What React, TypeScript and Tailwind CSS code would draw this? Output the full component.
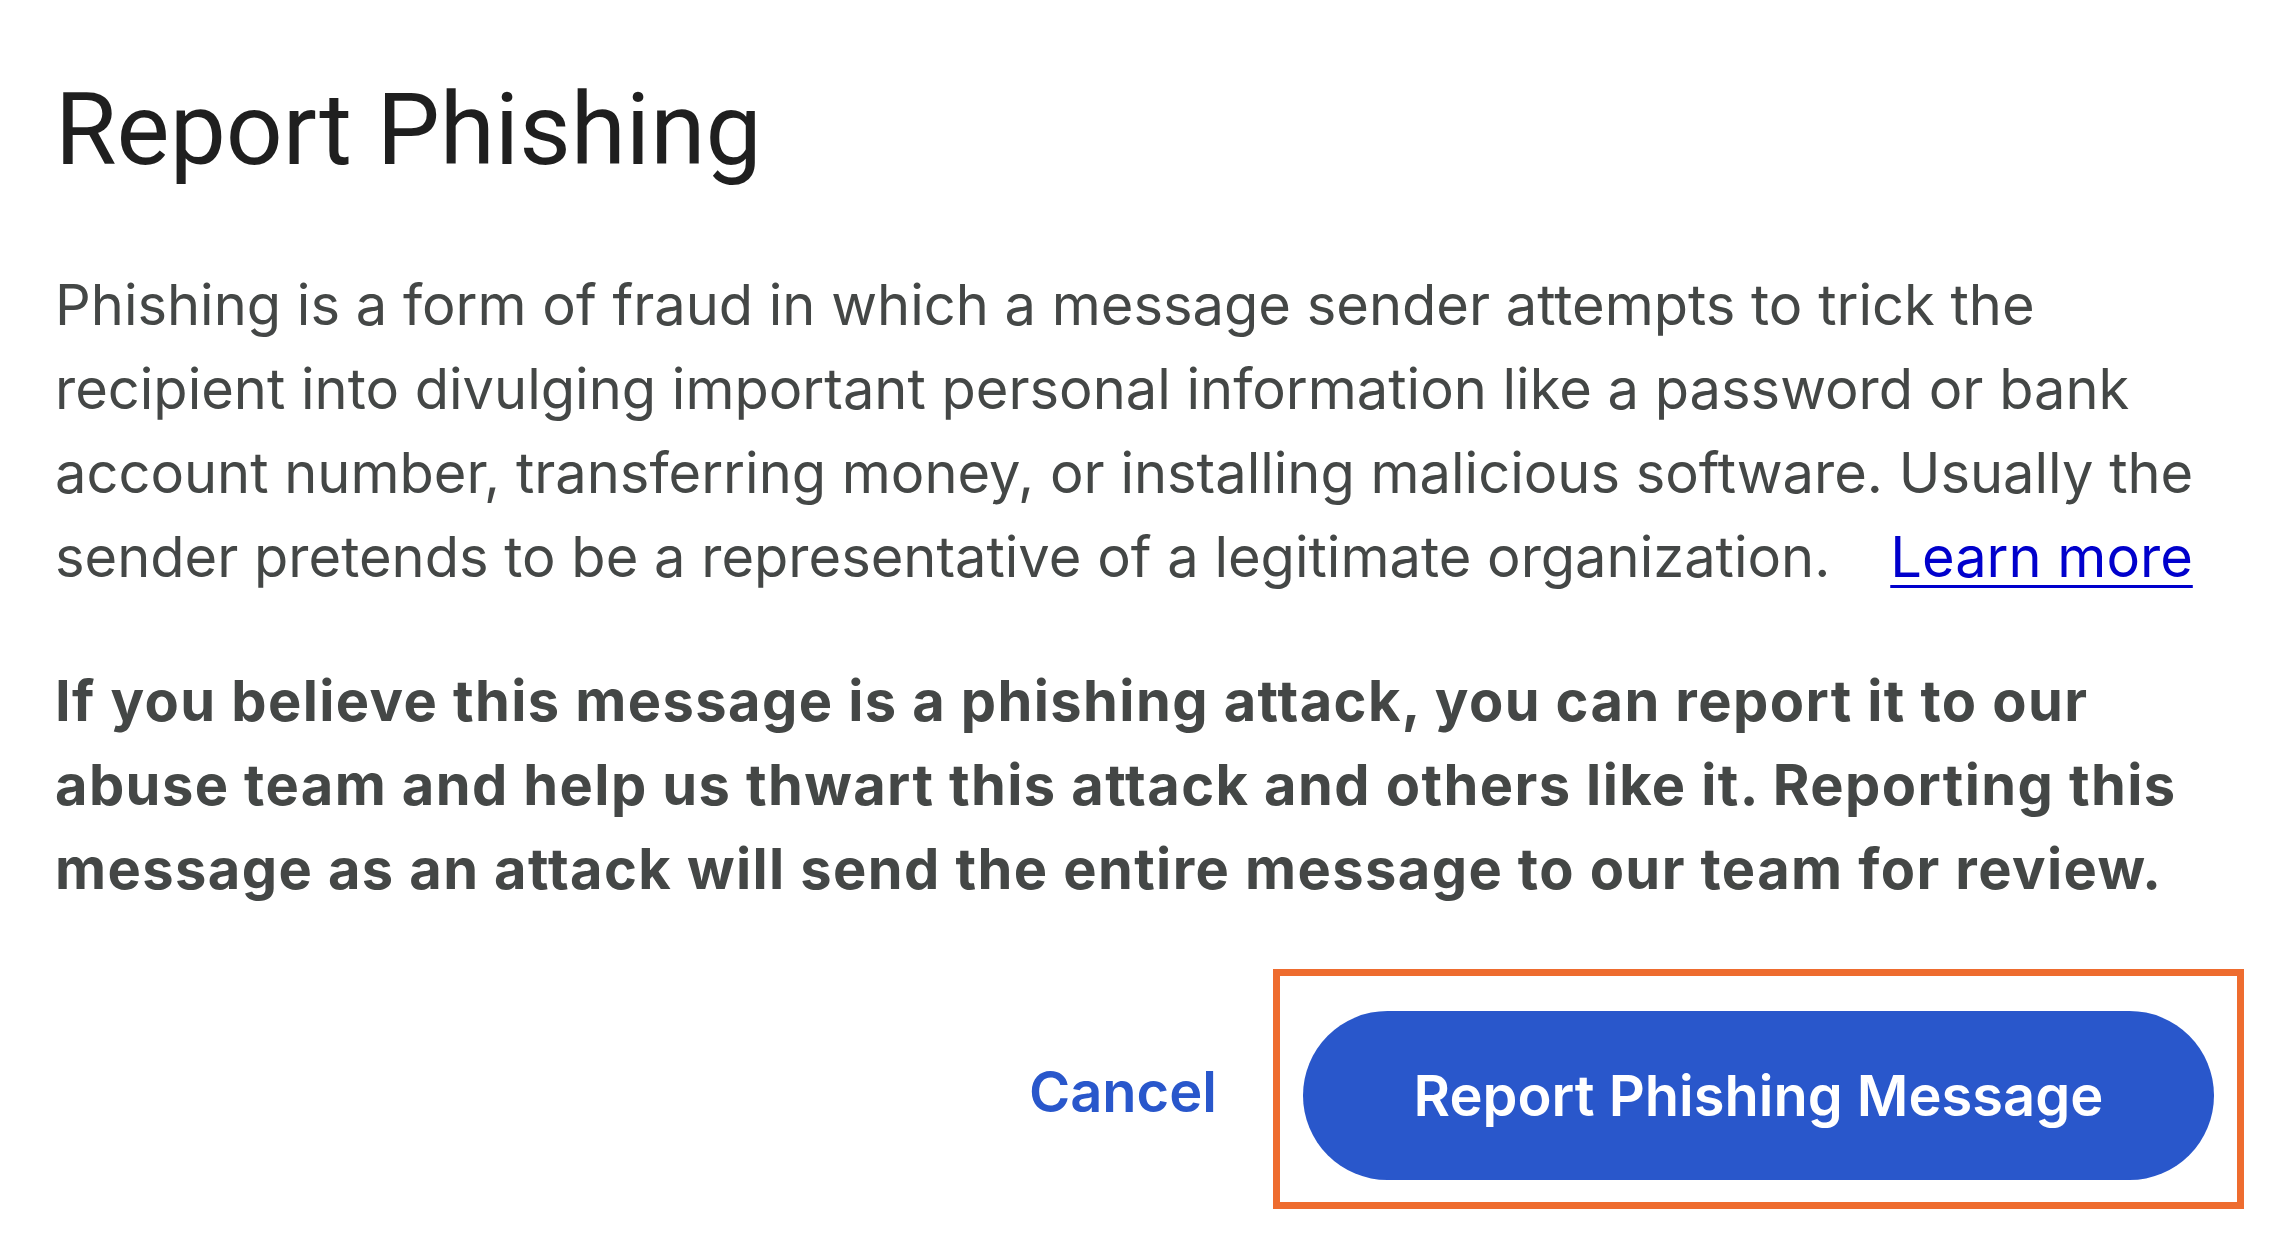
export default function App() {
  return (
    <div className="min-h-screen bg-white pl-[55px] pr-[34px] font-['Inter','Roboto',sans-serif]">
      {/* Header */}
      <h1 className="pt-[70px] font-['Roboto','Inter',sans-serif] text-[100px] leading-[120px] font-normal text-[#1f1f1f]">
        Report Phishing
      </h1>

      <div className="w-[2180px]">
        <p className="mt-[73px] text-[56px] leading-[84px] text-[#444746]">
          Phishing is a form of fraud in which a message sender attempts to trick the recipient into divulging important
          personal information like a password or bank account number, transferring money, or installing malicious
          software. Usually the sender pretends to be a representative of a legitimate organization.
          <a href="#" className="ml-[60px] text-[#0000cc] underline underline-offset-[8px] decoration-[3px]">
            Learn more
          </a>
        </p>

        <p className="mt-[60px] text-[56px] leading-[84px] font-bold tracking-[1.4px] text-[#444746]">
          If you believe this message is a phishing attack, you can report it to our abuse team and help us thwart this
          attack and others like it. Reporting this message as an attack will send the entire message to our team for
          review.
        </p>
      </div>

      {/* Actions */}
      <div className="mt-[58px] flex items-center justify-end gap-[56px]">
        <button className="mt-[6px] text-[56px] font-semibold text-[#2957cb]">Cancel</button>
        <div className="border-[7px] border-[#ee6c2f] px-[23px] pt-[35px] pb-[22px]">
          <button className="flex h-[169px] w-[911px] items-center justify-center rounded-full bg-[#2957cb] text-[56px] font-semibold text-white">
            Report Phishing Message
          </button>
        </div>
      </div>
    </div>
  );
}
